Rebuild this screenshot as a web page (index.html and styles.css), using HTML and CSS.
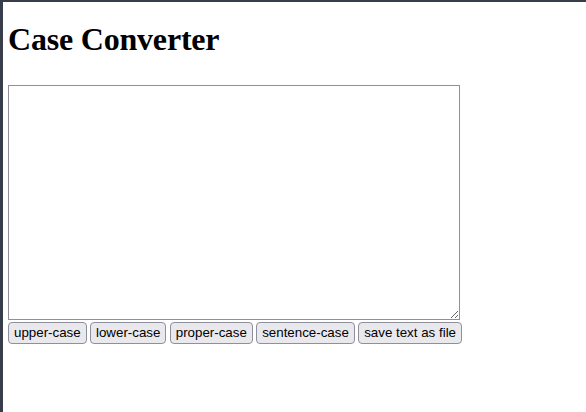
FILE: index.html
```html
<!DOCTYPE html>
<html>
<head>
<meta charset="utf-8">
<title>Case Converter</title>
<link rel="stylesheet" href="styles.css">
</head>
<body>
<h1 class="title">Case Converter</h1>
<textarea class="text-input"></textarea>
<div class="actions">
  <button class="btn">upper-case</button>
  <button class="btn">lower-case</button>
  <button class="btn">proper-case</button>
  <button class="btn">sentence-case</button>
  <button class="btn">save text as file</button>
</div>
</body>
</html>
```
FILE: styles.css
```css
html {
  border-top: 2px solid #373d4a;
  border-left: 3px solid #373d4a;
  min-height: 100%;
  box-sizing: border-box;
  background: #ffffff;
}
body {
  margin: 0;
  padding: 19px 8px 8px 5px;
  font-family: "Liberation Serif", serif;
}
.title {
  margin: 0;
  font-size: 32px;
  line-height: 37px;
  font-weight: bold;
  letter-spacing: -0.2px;
  color: #000;
}
.text-input {
  display: block;
  margin: 27px 0 0 0;
  width: 452px;
  height: 235px;
  box-sizing: border-box;
  border: 1px solid #8f8f9d;
  background: #fff;
  padding: 2px;
}
.actions {
  display: flex;
  gap: 3.3px;
  margin-top: 2px;
}
.btn {
  height: 22px;
  box-sizing: border-box;
  margin: 0;
  padding: 0 5px;
  border: 1px solid #8f8f9d;
  border-radius: 4px;
  background: #e9e9ed;
  color: #000;
  font-family: "Liberation Sans", Arial, sans-serif;
  font-size: 13.333px;
  line-height: 20px;
}
```
